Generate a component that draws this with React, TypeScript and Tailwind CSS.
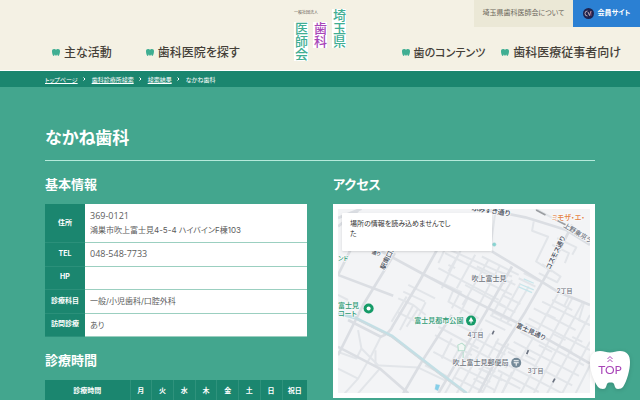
import type { ReactNode } from "react";

function ToothIcon() {
  return (
    <svg viewBox="0 0 16 14" className="h-[7px] w-2 shrink-0 fill-[#3fae92]" aria-hidden="true">
      <path d="M4 0C6 0 6.500 1 8 1s2-1 4-1c2.500 0 4 1.600 4 4.200 0 3-1.200 9.800-3.400 9.800-1.600 0-1.300-3-2.300-3-.8 0-.8 2.500-2.300 2.500S6.500 11 5.700 11c-1 0-.7 3-2.300 3C1.200 14 0 7.200 0 4.200 0 1.600 1.500 0 4 0Z" />
    </svg>
  );
}

function NavLink({ children, compact = false }: { children: ReactNode; compact?: boolean }) {
  return (
    <a
      href="#"
      className={`flex items-center gap-1 leading-4 font-medium whitespace-nowrap text-[#444038] ${compact ? "text-[11px]" : "text-[12px]"}`}
    >
      <ToothIcon />
      {children}
    </a>
  );
}

function LogoColumn({ text, tone }: { text: string; tone: string }) {
  return (
    <span className={`w-[14px] bg-white text-[13px] leading-[14px] font-medium [writing-mode:vertical-rl] ${tone}`}>
      {text}
    </span>
  );
}

function Header() {
  return (
    <header className="relative border-b border-white bg-[#f4f1e4]">
      <div className="flex h-[27px] justify-end text-[7px]">
        <a href="#" className="flex w-[99px] items-center justify-center bg-[#ebe8d6] whitespace-nowrap text-[#6b675c]">
          埼玉県歯科医師会について
        </a>
        <a href="#" className="flex w-[67px] items-center justify-center gap-1 bg-[#2b80d3] font-bold whitespace-nowrap text-white">
          <svg viewBox="0 0 22 22" className="size-[11px]" aria-hidden="true">
            <circle cx="11" cy="11" r="11" fill="#1e2350" />
            <path d="M9 6a5 5 0 1 0 0 10M10 8l3 7 3-9" fill="none" stroke="#c9b8bd" strokeWidth="1.800" />
            <path d="M16 6v10" stroke="#a0526a" strokeWidth="1.500" />
          </svg>
          会員サイト
        </a>
      </div>
      <nav className="flex h-[43px] items-center justify-between pt-2 pr-[19px] pl-[52px]">
        <div className="flex gap-[34px]">
          <NavLink>主な活動</NavLink>
          <NavLink>歯科医院を探す</NavLink>
        </div>
        <div className="flex gap-4">
          <NavLink compact>歯のコンテンツ</NavLink>
          <NavLink>歯科医療従事者向け</NavLink>
        </div>
      </nav>
      <a href="#" className="absolute top-[9px] left-1/2 flex -translate-x-1/2 items-start gap-[5px]">
        <span className="flex flex-col">
          <span className="h-[13px] text-[4px] leading-[7px] whitespace-nowrap text-[#57534a]">一般社団法人</span>
          <span className="flex items-start gap-[5px]">
            <LogoColumn text="医師会" tone="text-[#3fae92]" />
            <LogoColumn text="歯科" tone="text-[#a845b8]" />
          </span>
        </span>
        <LogoColumn text="埼玉県" tone="text-[#3fae92]" />
      </a>
    </header>
  );
}

function Breadcrumb() {
  const parents = ["トップページ", "歯科診療所検索", "検索結果"];
  return (
    <nav className="flex h-4 items-center gap-[6px] bg-[#1b866f] px-[45px] text-[6px] text-white">
      {parents.map((p) => (
        <span key={p} className="flex items-center gap-[5px]">
          <a href="#" className="underline underline-offset-1">
            {p}
          </a>
          <svg viewBox="0 0 6 8" className="h-1 w-[3px]" aria-hidden="true">
            <path d="M1 1l3 3-3 3" fill="none" stroke="white" strokeWidth="2" />
          </svg>
        </span>
      ))}
      <span>なかね歯科</span>
    </nav>
  );
}

function SectionTitle({ children }: { children: ReactNode }) {
  return <h2 className="text-[13px] leading-5 font-bold">{children}</h2>;
}

const info: { label: string; lines: string[]; height: string }[] = [
  { label: "住所", lines: ["369-0121", "鴻巣市吹上富士見4-5-4 ハイバインF棟103"], height: "h-[38px]" },
  { label: "TEL", lines: ["048-548-7733"], height: "h-6" },
  { label: "HP", lines: [""], height: "h-[23px]" },
  { label: "診療科目", lines: ["一般/小児歯科/口腔外科"], height: "h-6" },
  { label: "訪問診療", lines: ["あり"], height: "h-[23px]" },
];

const isNumber = (line: string) => /^[\d-]+$/.test(line);

function InfoTable() {
  return (
    <table className="mt-[10px] w-full border-collapse">
      <tbody>
        {info.map((row) => (
          <tr key={row.label} className={row.height}>
            <th scope="row" className="w-10 border-b border-[#2b907a] bg-[#1b866f] p-0 text-[7px] font-bold">
              {row.label}
            </th>
            <td className="border-b border-[#9bcfc0] bg-white py-0 pr-1 pl-[5px] text-[8px] leading-[14px] text-[#5c5c5c]">
              {row.lines.map((l) => (
                <div key={l} className={isNumber(l) ? "font-['Open_Sans'] text-[9px]" : ""}>
                  {l}
                </div>
              ))}
            </td>
          </tr>
        ))}
      </tbody>
    </table>
  );
}

function HoursTable() {
  const days = ["月", "火", "水", "木", "金", "土", "日"];
  return (
    <table className="mt-[10px] w-full table-fixed border-collapse text-[7px]">
      <thead>
        <tr className="h-6 bg-[#1b866f]">
          <th className="w-[85px] p-0 font-bold">診療時間</th>
          {days.map((d) => (
            <th key={d} className="border-l border-[#2f927c] p-0 font-bold">
              {d}
            </th>
          ))}
          <th className="w-[25px] border-l border-[#2f927c] p-0 font-bold">祝日</th>
        </tr>
      </thead>
    </table>
  );
}

const wideRoads = [
  "M0 40L70 12M0 65L60 18",
  "M400 12L470 20L560 38L680 75L753 120",
  "M130 140L250 205L380 275L530 350L640 410L753 475",
  "M460 140L560 200L660 262L753 300",
  "M0 210L165 272M0 210L40 130",
  "M170 145L75 300L0 450",
  "M30 345L128 395Q155 385 165 360L240 235L310 110",
  "M0 425L125 490L210 564",
  "M700 60L640 180L560 320L490 430L420 564",
  "M520 185L440 325L300 564",
  "M340 330L250 470L195 564",
];

const smallRoads = [
  "M470 24L458 110M585 50L580 78L628 96L592 170L640 200",
  "M300 120L480 200L520 215M360 150L330 200",
  "M640 120L690 145L678 175M655 100L712 128L700 150M610 178L665 215L655 232L600 205",
  "M180 280L225 300L262 330M195 260L260 290M210 240L290 280M225 300L185 375M205 275L160 350M240 310L205 365M262 292L240 335M175 320L235 350",
  "M330 110L300 175M370 130L310 250M410 150L355 250M450 165L372 300M485 180L400 340M320 145L500 235M330 180L350 190M300 190L480 285M280 220L370 262",
  "M345 255L330 290L420 340M365 262L340 310M390 275L365 325M400 210L520 270M415 185L530 240M380 240L500 305M430 155L540 210",
  "M520 225L460 330M545 235L485 345M570 245L505 355M490 270L545 297M475 295L530 322M460 320L515 347",
  "M0 270L30 285M60 375L70 430L55 460L0 440M70 430L120 480M128 395L100 450L60 520L0 490M60 520L20 564",
  "M112 435L112 480L240 487M125 490L60 564M240 487L320 525M285 440L360 480M260 480L330 515",
  "M300 365L420 430M320 340L430 395M290 390L400 450M340 400L310 460M370 415L340 470M400 430L365 490",
  "M430 370L320 564M455 385L355 564M480 400L390 564M510 415L430 564M410 400L500 448M395 428L485 475M380 455L470 500M362 485L455 530M345 515L435 560M470 410L530 440M445 455L505 487M425 490L490 525M405 520L470 555",
  "M660 262L600 370L540 470L490 564M700 280L580 500L545 564M640 285L700 315M730 295L640 460L585 564M753 330L690 445L625 564M753 410L715 480L670 564M753 480L710 564",
  "M585 310L710 375M570 340L753 435M610 290L753 360M545 380L735 480M560 355L600 375M525 410L720 512M508 440L700 540M640 385L680 405M490 470L670 564M478 495L600 560M560 450L590 465M600 420L640 440",
  "M735 295L720 345L753 360M690 275L675 305M620 325L650 340M700 395L730 410M670 425L700 440",
  "M450 500L420 490M490 505L465 564M520 500L490 564M465 510L545 550",
  "M590 12L650 45M540 220L590 245M555 205L600 228M440 345L500 375M455 330L520 362",
];

function MapDrawing() {
  return (
    <svg viewBox="338 209 251 184" preserveAspectRatio="xMidYMid slice" className="h-[184px] w-full bg-[#f3f4f6]" role="img" aria-label="地図">
      <g transform="translate(338 205) scale(0.3333)" fill="none" stroke="#e2e5e9" strokeLinejoin="round">
        {smallRoads.map((d) => (
          <path key={d} d={d} strokeWidth="6" />
        ))}
        {wideRoads.map((d) => (
          <path key={d} d={d} strokeWidth="8" stroke="#dbdee3" />
        ))}
        <path d="M0 325L50 338L160 392L300 500L385 564" stroke="#c3dfe5" strokeWidth="9" />
        <path d="M50 340L160 396L300 505L380 564" stroke="#d3d9dd" strokeWidth="3" />
        <path d="M545 238L585 255M555 222L585 235M540 246L580 263" stroke="#c8e6eb" strokeWidth="4" />
        <path d="M592 16L620 31M645 42L680 60" stroke="#9a9da1" strokeWidth="5" />
        <path d="M461 388L466 377M564 447L569 435M642 531L648 520" stroke="#6b7280" strokeWidth="5" />
        <path d="M358 420l12-6 10 8-2 14-18 1zM374 440v18" fill="#f1f7f4" stroke="#b4dccb" strokeWidth="3" />
        <path d="M292 536l13 3-6 18-10-5z" fill="#85cfe9" />
        <circle cx="467" cy="119" r="6" fill="#89d5d2" />
      </g>
      <g stroke="#f7f8fa" strokeWidth="1.500" paintOrder="stroke" fontWeight="500">
        <g fill="#454b58" fontSize="7">
          <text transform="translate(471 211) rotate(8)">ふみずき通り</text>
          <text transform="translate(562 227) rotate(31)" fontSize="6.500" fill="#6c717b">上野東京ライン</text>
          <text transform="translate(549 270) rotate(-64)" fontSize="6.500">コスモス通り</text>
          <text transform="translate(384 270) rotate(-64)" fontSize="6.500">駅南口通り</text>
          <text transform="translate(515 327) rotate(25)" fontSize="6.500">富士見通り</text>
          <text x="371" y="254" fontSize="5" transform="rotate(15 371 254)">通り</text>
        </g>
        <g fill="#6c717a" fontSize="7">
          <text x="471" y="281">吹上富士見</text>
          <text x="556" y="293" fontSize="6">2丁目</text>
          <text x="467" y="337" fontSize="6">4丁目</text>
          <text x="527" y="373" fontSize="6">3丁目</text>
          <text x="452" y="365">吹上富士見郵便局</text>
        </g>
        <g fill="#2c9a72" fontSize="7">
          <text x="338" y="308">富士見</text>
          <text x="338" y="316">コート</text>
          <text x="414" y="323">富士見都市公園</text>
          <text x="338" y="260" fontSize="6">ンド</text>
        </g>
        <text x="551" y="220" fill="#e58243" fontSize="7">
          ミモザ・エ・
        </text>
      </g>
      <circle cx="368.500" cy="308.500" r="5" fill="#169b68" />
      <circle cx="368.500" cy="308.500" r="2" fill="white" />
      <circle cx="470.500" cy="320.500" r="5" fill="#169b68" />
      <path d="M470.500 317l2.500 4.500h-2v2h-1v-2h-2z" fill="white" />
      <circle cx="515.500" cy="362.500" r="5" fill="#758a99" />
      <path d="M513 360.500h5M513 362.500h5M515.500 362.500v3" stroke="white" strokeWidth="1" />
    </svg>
  );
}

function AccessMap() {
  return (
    <div className="relative mt-[10px] bg-white p-[5px]">
      <MapDrawing />
      <div role="alert" className="absolute top-[9px] left-[9px] h-[38px] w-[150px] rounded-[1px] bg-white px-2 py-[6px] text-[7px] leading-[10px] text-[#333] shadow">
        <p className="w-[107px]">場所の情報を読み込めませんでした</p>
      </div>
    </div>
  );
}

function TopButton() {
  return (
    <a href="#" className="fixed right-[10px] bottom-[11px] flex h-[38px] w-10 justify-center drop-shadow-sm">
      <svg viewBox="0 0 40 38" className="absolute inset-0 h-full w-full" aria-hidden="true">
        <path
          d="M10 0C14 0 16 1.500 20 1.500S26 0 30 0C37 0 40 4 40 11C40 19 37 30 33 36Q31.500 38 28 38Q25.500 38 25 36L24 33Q23.500 31.500 22 31.500H19Q17.500 31.500 17 33L16 36Q15.500 38 13 38Q9.500 38 8 36C3 29 0 19 0 11C0 4 3 0 10 0Z"
          fill="white"
        />
        <path d="M17.500 8l2.500-2.500L22.500 8M17.500 11l2.500-2.500L22.500 11" fill="none" stroke="#a845b8" strokeWidth="1" />
      </svg>
      <span className="relative pt-3 font-[Lato] text-[12px] leading-[14px] text-[#a845b8]">TOP</span>
    </a>
  );
}

export default function App() {
  return (
    <div className="h-screen overflow-hidden bg-[#43a68e] font-[Inter,'Noto_Sans_CJK_JP',sans-serif] text-white [font-feature-settings:'palt']" lang="ja">
      <Header />
      <Breadcrumb />
      <main className="px-[45px] pt-[39px]">
        <h1 className="border-b border-[#b5eadb] pb-[10px] text-[17px] leading-6 font-bold">なかね歯科</h1>
        <div className="grid grid-cols-2 gap-[26px] pt-[13px]">
          <section>
            <SectionTitle>基本情報</SectionTitle>
            <InfoTable />
            <div className="pt-[13px]">
              <SectionTitle>診療時間</SectionTitle>
              <HoursTable />
            </div>
          </section>
          <section>
            <SectionTitle>アクセス</SectionTitle>
            <AccessMap />
          </section>
        </div>
      </main>
      <TopButton />
    </div>
  );
}
